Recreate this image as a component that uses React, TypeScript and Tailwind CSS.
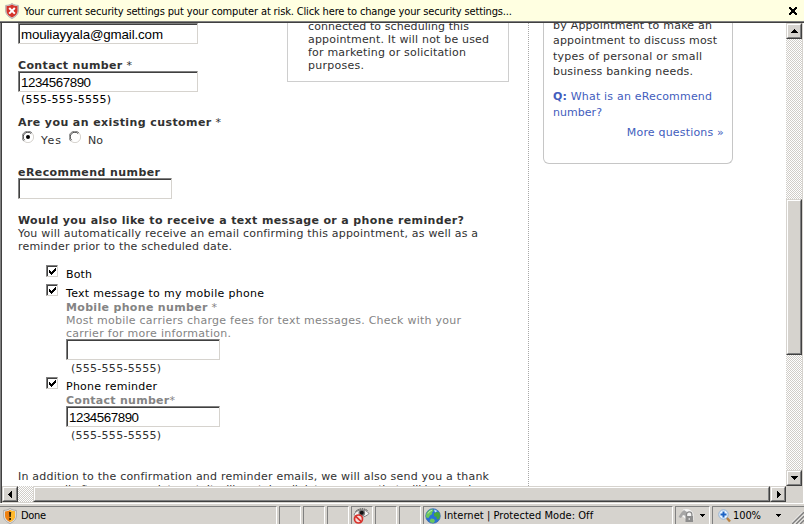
import { useLayoutEffect, useRef, useState } from 'react';
import type { ReactNode } from 'react';
import clsx from 'clsx';

const VERDANA = "font-['DejaVu_Sans',sans-serif] text-[11px] leading-[13px]";
const TAHOMA = "font-['DejaVu_Sans_Condensed','DejaVu_Sans',sans-serif] text-[11px] leading-[13px] text-black";

/* A single line of text, tracked so that it spans w pixels. */
function Line({ w, className, children }: { w: number; className?: string; children: ReactNode }) {
  const ref = useRef<HTMLSpanElement>(null);
  const [spacing, setSpacing] = useState(0);
  useLayoutEffect(() => {
    const el = ref.current;
    if (!el) return;
    const count = (el.textContent ?? '').length;
    if (count > 1) setSpacing((w - el.getBoundingClientRect().width) / (count - 1));
  }, [w]);
  return (
    <div className={clsx('whitespace-nowrap', className)}>
      <span ref={ref} style={{ letterSpacing: spacing }}>
        {children}
      </span>
    </div>
  );
}

function Field({ className, value, w = 70 }: { className: string; value?: string; w?: number }) {
  return (
    <div
      className={clsx(
        'h-[21px] shrink-0 border border-t-[#808080] border-l-[#808080] border-r-[#d6d3ce] border-b-[#d6d3ce] bg-white',
        className,
      )}
    >
      <div className="h-full border-t border-l border-[#404040] pl-[1px]">
        {value && (
          <Line w={w} className="pt-px font-['Liberation_Sans',Arial,sans-serif] text-[13.33px] leading-[18px] text-black">
            {value}
          </Line>
        )}
      </div>
    </div>
  );
}

function Check() {
  return (
    <div className="size-3 shrink-0 border border-t-[#808080] border-l-[#808080] border-r-[#d6d3ce] border-b-[#d6d3ce]">
      <div className="size-full border-t border-l border-[#404040]">
        <svg className="block" width="9" height="9" viewBox="0 0 9 9" shapeRendering="crispEdges">
          <path d="M1 3h1v1h1v1h1v-1h1v-1h1v-1h1v-1h1v3h-1v1h-1v1h-1v1h-1v1h-1v-1h-1v-1h-1z" fill="#000" />
        </svg>
      </div>
    </div>
  );
}

function Radio({ on }: { on?: boolean }) {
  return (
    <svg className="shrink-0" width="12" height="12" viewBox="0 0 12 12">
      <path d="M1.800 10.200A5.300 5.300 0 0 1 10 1.800" fill="none" stroke="#808080" />
      <path d="M2.600 9.200A4.300 4.300 0 0 1 9.200 2.600" fill="none" stroke="#404040" />
      <path d="M10 2A5.300 5.300 0 0 1 2 10" fill="none" stroke="#d6d3ce" />
      {on && <circle cx="6" cy="6" r="2" fill="#000" />}
    </svg>
  );
}

type Dir = 'up' | 'down' | 'left' | 'right';
const ARROWS: Record<Dir, string> = {
  up: 'M6 4h1v1h1v1h1v1h1v1h-7v-1h1v-1h1v-1h1z',
  down: 'M3 4h7v1h-1v1h-1v1h-1v1h-1v-1h-1v-1h-1v-1h-1z',
  left: 'M7 3h1v7h-1v-1h-1v-1h-1v-1h-1v-1h1v-1h1v-1h1z',
  right: 'M5 3h1v1h1v1h1v1h1v1h-1v1h-1v1h-1v1h-1z',
};

function Bevel({ className, children }: { className: string; children?: ReactNode }) {
  return (
    <div
      className={clsx(
        'shrink-0 border border-t-[#d6d3ce] border-l-[#d6d3ce] border-r-[#404040] border-b-[#404040]',
        className,
      )}
    >
      <div className="size-full border border-t-white border-l-white border-r-[#808080] border-b-[#808080] bg-[#d6d3ce]">
        {children}
      </div>
    </div>
  );
}

function ScrollButton({ dir }: { dir: Dir }) {
  return (
    <Bevel className="size-4">
      <svg className="block" width="12" height="12" viewBox="0 0 12 12" shapeRendering="crispEdges">
        <path d={ARROWS[dir]} fill="#000" />
      </svg>
    </Bevel>
  );
}

const DITHER = 'bg-white bg-[conic-gradient(#d0cdc8_25%,#fff_0_50%,#d0cdc8_0_75%,#fff_0)] bg-[length:2px_2px]';

function Pane({ className, children }: { className: string; children?: ReactNode }) {
  return (
    <div
      className={clsx(
        'flex h-[18px] shrink-0 items-center border-t border-r border-l border-t-[#808080] border-l-[#808080] border-r-white',
        className,
      )}
    >
      {children}
    </div>
  );
}

function Caret() {
  return (
    <svg width="5" height="3" viewBox="0 0 5 3" shapeRendering="crispEdges">
      <path d="M0 0h5v1h-1v1h-1v1h-1v-1h-1v-1h-1z" fill="#000" />
    </svg>
  );
}

function ErrorShield() {
  return (
    <svg className="shrink-0" width="14" height="16" viewBox="0 0 14 16">
      <path d="M7 .5C9 2 11 2.300 13.300 2.400V8c0 3.500-3 6-6.300 7.500C3.700 14 .7 11.500 .7 8V2.400C3 2.300 5 2 7 .5z" fill="#ddd" stroke="#a0a0a0" strokeWidth=".8" />
      <path d="M7 1.500c1.700 1 3.500 1.500 5.500 1.600V8c0 3-2.500 5.200-5.500 6.500C4 13.200 1.500 11 1.500 8V3.100C3.500 3 5.300 2.500 7 1.500z" fill="#d5342b" />
      <path d="M4.200 5l5.600 5.600M9.800 5l-5.600 5.600" stroke="#fff" strokeWidth="2" />
    </svg>
  );
}

function WarnShield() {
  return (
    <svg className="shrink-0" width="14" height="16" viewBox="0 0 14 16">
      <path d="M7 .5C9 2 11 2.300 13.300 2.400V8c0 3.500-3 6-6.300 7.500C3.700 14 .7 11.500 .7 8V2.400C3 2.300 5 2 7 .5z" fill="#e8e8e8" stroke="#999" strokeWidth=".8" />
      <path d="M7 2c1.700 1 3.300 1.400 5 1.500V8c0 2.700-2.200 4.700-5 6-2.800-1.300-5-3.300-5-6V3.500C3.700 3.400 5.300 3 7 2z" fill="#ee8010" />
      <path d="M7 2c1.700 1 3.300 1.400 5 1.500V8c0 2.700-2.200 4.700-5 6z" fill="#ffb92e" />
      <path d="M6 4h2.200l-.4 5H6.400zM6.200 10h1.800v2H6.200z" fill="#3a2500" />
    </svg>
  );
}

function BlockedEye() {
  return (
    <svg className="shrink-0" width="17" height="16" viewBox="0 0 17 16">
      <path d="M1 6.500C4 1 12 0 16 5.500 12 10 5 10.500 1 6.500z" fill="#f6f6f6" stroke="#777" strokeWidth=".9" />
      <path d="M2.500 3.500C6 0 12 0 15 3" fill="none" stroke="#444" strokeDasharray="1.500 .8" />
      <circle cx="8.800" cy="5" r="3.300" fill="#777" />
      <circle cx="8.800" cy="4.700" r="2" fill="#111" />
      <circle cx="5.500" cy="11" r="4" fill="#f7dcda" stroke="#d8312b" strokeWidth="1.700" />
      <path d="M2.700 8.300l5.600 5.400" stroke="#d8312b" strokeWidth="1.700" />
    </svg>
  );
}

function Globe() {
  return (
    <svg className="shrink-0" width="16" height="16" viewBox="0 0 16 16">
      <circle cx="8" cy="8" r="7.300" fill="#2a70d6" stroke="#3b6fa8" strokeWidth=".7" />
      <path d="M2 4.500C3.500 2 6 1 8 1.200L8.500 3 7 4.500 7.300 6 5 7.500 3.500 10 1.200 9.500C.8 7.500 1 6 2 4.500z" fill="#6cc85a" />
      <path d="M9 5.500l2.500-1.500 2.800.5c1 2.500.8 4.500-.3 6.500l-2 .5-.5-2.500L9 8z" fill="#45a83c" />
      <path d="M6 10.500l3 .5 1 2-1.500 2C6.500 15 5 14 4.500 13z" fill="#6cc85a" />
      <path d="M9 1.500l3.500 1.500-2.500 1.500z" fill="#bfe6ff" />
      <path d="M3 5.500C4 3.500 6 2.500 7 2.500" stroke="#c4eeb8" fill="none" />
    </svg>
  );
}

function GlobeLock() {
  return (
    <svg className="shrink-0" width="17" height="15" viewBox="0 0 17 15">
      <path d="M5 1.500C9 0 14 1.500 15.500 6v6H9L4 8z" fill="#f5f5f5" />
      <path d="M.5 9c1.500-2.500 3-5 5.500-7l3 2-1 4-3-1-2 3z" fill="#a6a6a6" />
      <path d="M8.500 9V6.500a2.700 2.700 0 0 1 5.400 0V9" fill="none" stroke="#8a8a8a" strokeWidth="1.300" />
      <rect x="7.500" y="8" width="7.500" height="6" fill="#8d8d8d" />
      <path d="M11.200 10v2" stroke="#eee" />
    </svg>
  );
}

function Magnifier() {
  return (
    <svg className="shrink-0" width="13" height="14" viewBox="0 0 13 14">
      <path d="M8.500 8.500l3.500 4" stroke="#b9803f" strokeWidth="2.400" />
      <circle cx="5.500" cy="5.500" r="4.700" fill="#e9f4ff" stroke="#8fb0d4" />
      <path d="M5.500 2.500v6M2.500 5.500h6" stroke="#1d63c4" strokeWidth="2" />
    </svg>
  );
}

function ContactFields() {
  return (
    <div className="w-[269px] shrink-0">
      <Field className="w-[180px]" value="mouliayyala@gmail.com" w={142} />
      <Line w={114} className="mt-[15px]">
        <b>Contact number</b> *
      </Line>
      <Field className="-mt-px w-[180px]" value="1234567890" />
      <Line w={90} className="mt-px pl-[3px] text-black">(555-555-5555)</Line>
      <Line w={203} className="mt-[10px]">
        <b>Are you an existing customer</b> *
      </Line>
      <div className="mt-[2px] flex h-4 pl-1">
        <Radio on />
        <Line w={20} className="ml-[7px] pt-[3px]">Yes</Line>
        <div className="w-[7px]" />
        <Radio />
        <Line w={15} className="ml-[7px] pt-[3px]">No</Line>
      </div>
    </div>
  );
}

function ReminderOptions() {
  return (
    <div className="mt-3 pl-7">
      <div className="flex h-[19px]">
        <Check />
        <Line w={26} className="ml-2 pt-[3px] text-black">Both</Line>
      </div>
      <div className="flex h-[17px]">
        <Check />
        <Line w={198} className="ml-2 pt-[3px] text-black">Text message to my mobile phone</Line>
      </div>
      <div className="pl-5 text-[#848484]">
        <Line w={151}>
          <b>Mobile phone number</b> *
        </Line>
        <Line w={395}>Most mobile carriers charge fees for text messages. Check with your</Line>
        <Line w={165}>carrier for more information.</Line>
        <Field className="-mt-px w-[154px]" />
        <Line w={90} className="mt-[2px] pl-[5px] text-[#313131]">(555-555-5555)</Line>
      </div>
      <div className="mt-[2px] flex h-[17px]">
        <Check />
        <Line w={91} className="ml-2 pt-[3px] text-black">Phone reminder</Line>
      </div>
      <div className="pl-5 text-[#848484]">
        <Line w={109}>
          <b>Contact number</b>*
        </Line>
        <Field className="-mt-px w-[154px]" value="1234567890" />
        <Line w={90} className="mt-[2px] pl-[5px] text-[#313131]">(555-555-5555)</Line>
      </div>
    </div>
  );
}

function Form() {
  return (
    <div className={clsx('w-[527px] shrink-0 border-r border-dotted border-[#a8a8a8] pl-4 text-[#313131]', VERDANA)}>
      <div className="flex">
        <ContactFields />
        <div className="h-[59px] w-[222px] border border-t-0 border-[#cecece] pl-5">
          <Line w={161} className="-mt-[3px]">connected to scheduling this</Line>
          <Line w={181}>appointment. It will not be used</Line>
          <Line w={158}>for marketing or solicitation</Line>
          <Line w={56}>purposes.</Line>
        </div>
      </div>
      <Line w={142} className="mt-[19px]">
        <b>eRecommend number</b>
      </Line>
      <Field className="-mt-px w-[154px]" />
      <Line w={446} className="mt-[15px]">
        <b>Would you also like to receive a text message or a phone reminder?</b>
      </Line>
      <Line w={460}>You will automatically receive an email confirming this appointment, as well as a</Line>
      <Line w={214}>reminder prior to the scheduled date.</Line>
      <ReminderOptions />
      <Line w={471} className="mt-7">
        In addition to the confirmation and reminder emails, we will also send you a thank
      </Line>
      <Line w={463}>you email after your appointment. It will contain a link to a survey that will help make</Line>
    </div>
  );
}

function Questions() {
  return (
    <div
      className={clsx(
        'ml-[14px] h-[141px] w-[190px] rounded-b-[6px] border border-t-0 border-[#c6c6c6] pr-[9px] pl-[9px] text-[#313131]',
        VERDANA,
      )}
    >
      <Line w={159} className="-mt-1">by Appointment to make an</Line>
      <Line w={164} className="mt-[2px]">appointment to discuss most</Line>
      <Line w={149} className="mt-[3px]">types of personal or small</Line>
      <Line w={140} className="mt-[2px]">business banking needs.</Line>
      <div className="text-[#425dbd]">
        <Line w={159} className="mt-3">
          <b>Q:</b> What is an eRecommend
        </Line>
        <Line w={49} className="mt-[3px]">number?</Line>
        <Line w={97} className="mt-[7px] -mr-px text-right">More questions »</Line>
      </div>
    </div>
  );
}

export default function App() {
  return (
    <div className="flex h-[524px] w-[804px] flex-col overflow-hidden bg-[#d6d3ce]">
      <div className={clsx('flex h-[21px] shrink-0 items-center bg-[#ffffe1] pl-[5px]', TAHOMA)}>
        <ErrorShield />
        <Line w={488} className="ml-[5px] pt-[2px]">
          Your current security settings put your computer at risk. Click here to change your security settings...
        </Line>
        <svg className="mr-[7px] ml-auto" width="8" height="8" viewBox="0 0 8 8" shapeRendering="crispEdges">
          <path d="M0 0h2v1h1v1h2v-1h1v-1h2v2h-1v1h-1v2h1v1h1v2h-2v-1h-1v-1h-2v1h-1v1h-2v-2h1v-1h1v-2h-1v-1h-1z" fill="#000" />
        </svg>
      </div>
      <div className="h-px shrink-0 bg-[#808080]" />
      <div className="h-px shrink-0 bg-[#404040]" />
      <div className="flex h-[480px] shrink-0 border-l border-[#808080]">
        <div className="w-px shrink-0 bg-[#404040]" />
        <div className="flex w-[784px] shrink-0 flex-col">
          <div className="flex h-[463px] overflow-hidden bg-white">
            <Form />
            <Questions />
          </div>
          <div className={clsx('flex h-4', DITHER)}>
            <ScrollButton dir="left" />
            <div className="w-[15px]" />
            <Bevel className="h-4 w-[737px]" />
            <ScrollButton dir="right" />
          </div>
        </div>
        <div className={clsx('h-[463px] w-4 shrink-0', DITHER)}>
          <ScrollButton dir="up" />
          <div className="h-[160px]" />
          <Bevel className="h-[156px] w-4" />
          <div className="h-[115px]" />
          <ScrollButton dir="down" />
        </div>
        <div className="ml-px w-px bg-white" />
      </div>
      <div className="h-px shrink-0 bg-white" />
      <div className={clsx('mt-[2px] flex gap-[2px]', TAHOMA)}>
        <Pane className="w-[277px] border-l-0 pl-[3px]">
          <WarnShield />
          <Line w={25} className="ml-1">Done</Line>
        </Pane>
        <Pane className="w-[22px]" />
        <Pane className="w-[22px]" />
        <Pane className="w-[22px]" />
        <Pane className="w-[22px] pl-px">
          <BlockedEye />
        </Pane>
        <Pane className="w-[22px]" />
        <Pane className="w-[22px]" />
        <Pane className="w-[250px] pl-px">
          <Globe />
          <Line w={149} className="ml-[3px]">Internet | Protected Mode: Off</Line>
        </Pane>
        <Pane className="w-[35px] pl-[2px]">
          <GlobeLock />
          <div className="ml-[5px]">
            <Caret />
          </div>
        </Pane>
        <Pane className="w-[92px] border-r-0 pl-[5px]">
          <Magnifier />
          <Line w={28} className="ml-[2px]">100%</Line>
          <div className="ml-[15px]">
            <Caret />
          </div>
          <svg className="mt-auto ml-auto" width="12" height="12" viewBox="0 0 12 12">
            <path d="M0 12L12 0M4 12l8-8M8 12l4-4" stroke="#808080" strokeWidth="1.600" />
            <path d="M-1.500 12L12-1.500M2.500 12L12 2.500M6.500 12L12 6.500" stroke="#fff" strokeWidth=".8" />
          </svg>
        </Pane>
      </div>
    </div>
  );
}
